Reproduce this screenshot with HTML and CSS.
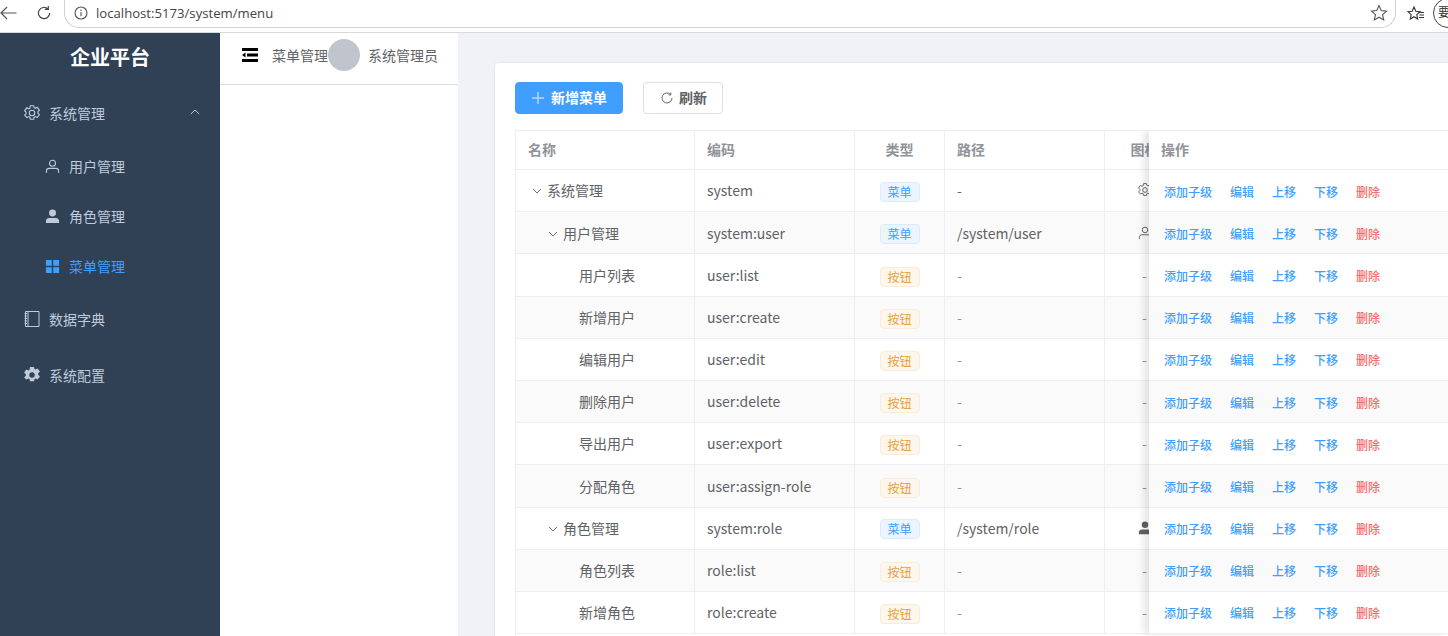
FILE: index.html
```html
<!DOCTYPE html>
<html lang="zh">
<head>
<meta charset="utf-8">
<title>菜单管理</title>
<link rel="stylesheet" href="styles.css">
</head>
<body>
<div class="browser">
  <svg class="b-back" width="18" height="14" viewBox="0 0 18 14"><path d="M16.500 7H1M7 1 1 7l6 6" fill="none" stroke="#555" stroke-width="1.2"/></svg>
  <svg class="b-reload" width="16" height="16" viewBox="0 0 16 16"><path d="M13.600 8a5.600 5.600 0 1 1-1.700-4M12.300 1v3.400H8.900" fill="none" stroke="#444" stroke-width="1.200"/></svg>
  <div class="omnibox">
    <svg width="14" height="14" viewBox="0 0 14 14"><circle cx="7" cy="7" r="6" fill="none" stroke="#555" stroke-width="1.100"/><path d="M7 6v4.200M7 3.600v1.300" stroke="#555" stroke-width="1.100"/></svg>
    <span class="url">localhost:5173/system/menu</span>
    <svg class="star" width="18" height="18" viewBox="0 0 18 18"><path d="m9 1.600 2.200 4.900 5.300.6-4 3.500 1.200 5.300L9 13.200l-4.700 2.700 1.200-5.300-4-3.500 5.300-.6z" fill="none" stroke="#555" stroke-width="1.100"/></svg>
  </div>
  <svg class="b-fav" width="18" height="18" viewBox="0 0 18 18"><path d="m7 2 1.800 4.200 4.200.5-3.200 2.900.9 4.400L7 11.700l-3.700 2.300.9-4.400L1 6.700l4.200-.5zM12 7.500h5M12.500 10h4.500M12 12.500h5" fill="none" stroke="#333" stroke-width="1.100"/></svg>
  <div class="b-profile">要</div>
</div>
<div class="app">
  <aside class="sidebar">
    <div class="logo">企业平台</div>
    <div class="menu-item top first">
      <svg class="mi big" viewBox="0 0 16 16"><path d="M6.300.5h3.400l.4 2 1.200.6 1.900-1 2.200 2.900-1.500 1.500v1.500l1.500 1.500-2.200 2.900-1.900-1-1.200.6-.4 2H6.300l-.4-2-1.200-.6-1.900 1L.6 10l1.500-1.500V7L.6 5.500l2.200-2.900 1.900 1 1.200-.6z" transform="translate(0 .2)" fill="none" stroke="#bfcbd9" stroke-width="1.100"/><circle cx="8" cy="8" r="2.700" fill="none" stroke="#bfcbd9" stroke-width="1.100"/></svg>
      <span class="mt">系统管理</span>
      <svg class="caret" width="10" height="6" viewBox="0 0 10 6"><path d="m.8 5 4.200-4 4.200 4" fill="none" stroke="#bfcbd9"/></svg>
    </div>
    <div class="menu-item sub">
      <svg class="mi" viewBox="0 0 16 16"><circle cx="8" cy="4.500" r="3.200" fill="none" stroke="#bfcbd9" stroke-width="1.100"/><path d="M1.500 15v-2c0-2 1.500-3 3-3h7c1.500 0 3 1 3 3v2" fill="none" stroke="#bfcbd9" stroke-width="1.100"/></svg>
      <span class="mt">用户管理</span>
    </div>
    <div class="menu-item sub">
      <svg class="mi" viewBox="0 0 16 16"><circle cx="8" cy="4.300" r="3.700" fill="#bfcbd9"/><path d="M1 15v-2.200C1 11 2.500 9.600 4.500 9.600h7c2 0 3.500 1.400 3.500 3.200V15z" fill="#bfcbd9"/></svg>
      <span class="mt">角色管理</span>
    </div>
    <div class="menu-item sub active">
      <svg class="mi" viewBox="0 0 16 16"><path d="M1 1h6.200v6.200H1zM8.800 1H15v6.200H8.800zM1 8.800h6.200V15H1zM8.800 8.800H15V15H8.800z" fill="#409eff"/></svg>
      <span class="mt">菜单管理</span>
    </div>
    <div class="menu-item top dict">
      <svg class="mi big" viewBox="0 0 16 16"><path d="M1.500.5h13.500v15H1.500zM4 .5v15M.5 2.500h2.500M.5 5h2.500M.5 7.500h2.500M.5 10h2.500M.5 12.500h2.500" fill="none" stroke="#bfcbd9" stroke-width="1"/></svg>
      <span class="mt">数据字典</span>
    </div>
    <div class="menu-item top conf">
      <svg class="mi big" viewBox="0 0 16 16"><path d="M6-.2h4l.5 2.200 1 .5 2.100-1.100 2.300 3.200-1.700 1.600v1.600l1.700 1.600-2.300 3.200-2.100-1.100-1 .5-.5 2.200H6l-.5-2.200-1-.5-2.100 1.100L.1 10.400l1.700-1.600V7.200L.1 5.600l2.300-3.200 2.100 1.100 1-.5z" fill="#bfcbd9"/><circle cx="8" cy="8" r="2.700" fill="#304156"/></svg>
      <span class="mt">系统配置</span>
    </div>
  </aside>
  <div class="left-col">
    <header class="topbar">
      <svg class="fold" width="16" height="14" viewBox="0 0 16 14"><path d="M0 0h16v3H0zM5 5.500h11v3H5zM0 11h16v3H0zM0 7l3.500-2.500v5z" fill="#000"/></svg>
      <span class="crumb">菜单管理</span>
      <span class="avatar"></span>
      <span class="username">系统管理员</span>
    </header>
  </div>
  <main class="main">
    <section class="card">
      <div class="toolbar">
        <button class="btn primary"><svg width="12" height="12" viewBox="0 0 12 12"><path d="M6 0v12M0 6h12" stroke="#b3d8ff" stroke-width="1.500"/></svg><span>新增菜单</span></button>
        <button class="btn plain"><svg width="12" height="12" viewBox="0 0 12 12"><path d="M11 6a5 5 0 1 1-1.500-3.600M9.800.6v2.300H7.500" fill="none" stroke="#606266" stroke-width="1"/></svg><span>刷新</span></button>
      </div>
      <div class="table-wrap">
        <table class="table">
          <colgroup><col class="c1"><col class="c2"><col class="c3"><col class="c4"><col class="c5"></colgroup>
          <thead><tr><th>名称</th><th>编码</th><th class="ctr">类型</th><th>路径</th><th class="ctr">图标</th></tr></thead>
          <tbody>
            <tr><td class="l0"><svg class="ex" viewBox="0 0 10 6"><path d="m1 1 4 4 4-4" fill="none" stroke="#606266" stroke-width=".9"/></svg>系统管理</td><td>system</td><td class="ctr"><span class="tag m">菜单</span></td><td>-</td><td class="ctr"><svg class="ti" viewBox="0 0 16 16"><path d="M6.300.5h3.400l.4 2 1.200.6 1.900-1 2.200 2.900-1.500 1.500v1.500l1.500 1.500-2.200 2.900-1.900-1-1.200.6-.4 2H6.300l-.4-2-1.200-.6-1.900 1L.6 10l1.500-1.500V7L.6 5.500l2.200-2.900 1.900 1 1.200-.6z" transform="translate(0 .2)" fill="none" stroke="#606266" stroke-width="1.100"/><circle cx="8" cy="8" r="2.700" fill="none" stroke="#606266" stroke-width="1.100"/></svg></td></tr>
            <tr class="alt"><td class="l1"><svg class="ex" viewBox="0 0 10 6"><path d="m1 1 4 4 4-4" fill="none" stroke="#606266" stroke-width=".9"/></svg>用户管理</td><td>system:user</td><td class="ctr"><span class="tag m">菜单</span></td><td>/system/user</td><td class="ctr"><svg class="ti" viewBox="0 0 16 16"><circle cx="8" cy="4.500" r="3.200" fill="none" stroke="#606266" stroke-width="1.100"/><path d="M1.500 15v-2c0-2 1.500-3 3-3h7c1.500 0 3 1 3 3v2" fill="none" stroke="#606266" stroke-width="1.100"/></svg></td></tr>
            <tr><td class="l2">用户列表</td><td>user:list</td><td class="ctr"><span class="tag b">按钮</span></td><td class="dim">-</td><td class="ctr dim">-</td></tr>
            <tr class="alt"><td class="l2">新增用户</td><td>user:create</td><td class="ctr"><span class="tag b">按钮</span></td><td class="dim">-</td><td class="ctr dim">-</td></tr>
            <tr><td class="l2">编辑用户</td><td>user:edit</td><td class="ctr"><span class="tag b">按钮</span></td><td class="dim">-</td><td class="ctr dim">-</td></tr>
            <tr class="alt"><td class="l2">删除用户</td><td>user:delete</td><td class="ctr"><span class="tag b">按钮</span></td><td class="dim">-</td><td class="ctr dim">-</td></tr>
            <tr><td class="l2">导出用户</td><td>user:export</td><td class="ctr"><span class="tag b">按钮</span></td><td class="dim">-</td><td class="ctr dim">-</td></tr>
            <tr class="alt"><td class="l2">分配角色</td><td>user:assign-role</td><td class="ctr"><span class="tag b">按钮</span></td><td class="dim">-</td><td class="ctr dim">-</td></tr>
            <tr><td class="l1"><svg class="ex" viewBox="0 0 10 6"><path d="m1 1 4 4 4-4" fill="none" stroke="#606266" stroke-width=".9"/></svg>角色管理</td><td>system:role</td><td class="ctr"><span class="tag m">菜单</span></td><td>/system/role</td><td class="ctr"><svg class="ti" viewBox="0 0 16 16"><circle cx="8" cy="4.300" r="3.700" fill="#606266"/><path d="M1 15v-2.200C1 11 2.500 9.600 4.500 9.600h7c2 0 3.500 1.400 3.500 3.200V15z" fill="#606266"/></svg></td></tr>
            <tr class="alt"><td class="l2">角色列表</td><td>role:list</td><td class="ctr"><span class="tag b">按钮</span></td><td class="dim">-</td><td class="ctr dim">-</td></tr>
            <tr><td class="l2">新增角色</td><td>role:create</td><td class="ctr"><span class="tag b">按钮</span></td><td class="dim">-</td><td class="ctr dim">-</td></tr>
          </tbody>
        </table>
        <div class="fixed">
          <div class="fhead">操作</div>
          <div class="frow"><a>添加子级</a><a>编辑</a><a>上移</a><a>下移</a><a class="del">删除</a></div>
          <div class="frow alt"><a>添加子级</a><a>编辑</a><a>上移</a><a>下移</a><a class="del">删除</a></div>
          <div class="frow"><a>添加子级</a><a>编辑</a><a>上移</a><a>下移</a><a class="del">删除</a></div>
          <div class="frow alt"><a>添加子级</a><a>编辑</a><a>上移</a><a>下移</a><a class="del">删除</a></div>
          <div class="frow"><a>添加子级</a><a>编辑</a><a>上移</a><a>下移</a><a class="del">删除</a></div>
          <div class="frow alt"><a>添加子级</a><a>编辑</a><a>上移</a><a>下移</a><a class="del">删除</a></div>
          <div class="frow"><a>添加子级</a><a>编辑</a><a>上移</a><a>下移</a><a class="del">删除</a></div>
          <div class="frow alt"><a>添加子级</a><a>编辑</a><a>上移</a><a>下移</a><a class="del">删除</a></div>
          <div class="frow"><a>添加子级</a><a>编辑</a><a>上移</a><a>下移</a><a class="del">删除</a></div>
          <div class="frow alt"><a>添加子级</a><a>编辑</a><a>上移</a><a>下移</a><a class="del">删除</a></div>
          <div class="frow"><a>添加子级</a><a>编辑</a><a>上移</a><a>下移</a><a class="del">删除</a></div>
        </div>
      </div>
    </section>
  </main>
</div>
</body>
</html>
```
FILE: styles.css
```css
* { box-sizing: border-box; }
html, body { margin: 0; height: 100%; overflow: hidden; }
body { font-family: "Noto Sans CJK SC", "Noto Sans", sans-serif; font-size: 14px; color: #606266; background: #fff; }

.browser { height: 33px; display: flex; align-items: flex-start; background: #fff; border-bottom: 1px solid #d9d9d9; }
.b-back { margin: 6px 0 0 0; flex: none; }
.b-reload { margin: 5px 0 0 18px; flex: none; }
.omnibox { width: 1332px; height: 29px; margin: -1px 0 0 12px; flex: none; border: 1px solid #d0d0d0; border-top: 0; border-radius: 0 0 15px 15px; display: flex; align-items: center; padding: 0 7px 0 9px; }
.url { margin-left: 8px; font-family: "Open Sans", "Noto Sans", sans-serif; font-size: 13.15px; color: #444; flex: 1; }
.b-fav { margin: 5px 0 0 11px; flex: none; }
.b-profile { width: 30px; height: 30px; margin: -2px -20px 0 8px; flex: none; border: 1px solid #444; border-radius: 50%; font-size: 12px; line-height: 26px; padding-left: 4px; color: #333; }

.app { display: flex; height: 603px; }
.sidebar { width: 220px; flex: none; background: #304156; overflow: hidden; }
.logo { height: 47px; padding-top: 4px; text-align: center; color: #fff; font-size: 20px; font-weight: 700; line-height: 39px; }
.menu-item { display: flex; align-items: center; color: #bfcbd9; }
.top { padding-left: 24px; }
.first { height: 56px; margin-top: 5px; }
.sub { height: 50px; padding-left: 45px; }
.active { color: #409eff; }
.dict { height: 56px; }
.conf { height: 56px; }
.mi { width: 15px; height: 15px; flex: none; }
.mi.big { width: 16px; height: 16px; }
.top .mt { margin-left: 9px; }
.sub .mt { margin-left: 9px; }
.caret { margin-left: auto; margin-right: 20px; margin-bottom: 2px; }

.left-col { width: 238px; flex: none; background: #fff; }
.topbar { height: 52px; border-bottom: 1px solid #dcdfe6; display: flex; align-items: center; padding: 0 0 8px 22px; }
.fold { flex: none; margin-top: 1px; }
.crumb { margin-left: 14px; flex: none; }
.avatar { width: 32px; height: 32px; border-radius: 50%; background: #c0c4cc; flex: none; }
.username { margin-left: 8px; flex: none; }

.main { flex: 1; min-width: 0; background: #f0f2f5; padding: 29px 0 0 36px; overflow: hidden; }
.card { width: 1000px; height: 640px; background: #fff; border: 1px solid #e4e7ed; border-radius: 4px; padding: 19px 0 0 20px; }
.toolbar { display: flex; gap: 20px; height: 32px; margin-bottom: 16px; }
.btn { height: 32px; padding: 0 0 2px; border-radius: 4px; font: inherit; font-weight: 700; display: inline-flex; align-items: center; justify-content: center; cursor: pointer; }
.btn svg { margin-top: 2px; }
.btn.primary { width: 108px; background: #409eff; border: 1px solid #409eff; color: #fff; gap: 7px; padding-left: 1px; }
.btn.plain { width: 80px; background: #fff; border: 1px solid #dcdfe6; color: #606266; gap: 6px; padding-left: 2px; }

.table-wrap { position: relative; width: 985px; height: 520px; overflow: hidden; border-top: 1px solid #ebeef5; border-left: 1px solid #ebeef5; }
.table { border-collapse: separate; border-spacing: 0; table-layout: fixed; width: 669px; }
.c1 { width: 179px; } .c2 { width: 160px; } .c3 { width: 90px; } .c4 { width: 160px; } .c5 { width: 80px; }
th, td { border-right: 1px solid #ebeef5; border-bottom: 1px solid #ebeef5; padding: 0 12px .5px; text-align: left; white-space: nowrap; }
th { height: 39px; padding-bottom: 2px; color: #909399; font-weight: 700; }
td { height: 42.2px; }
td:last-child, th:last-child { padding-left: 0; padding-right: 0; }
.ctr { text-align: center; }
.alt td, .frow.alt { background: #fafafa; }
.dim { color: #909399; }
.l0 { padding-left: 16px; }
.l1 { padding-left: 32px; }
.l2 { padding-left: 63px; }
.ex { width: 10px; height: 6px; margin-right: 5px; vertical-align: 2px; }
.ti { width: 14px; height: 14px; vertical-align: -1px; }
.tag { display: inline-block; width: 40px; height: 20px; line-height: 18px; border-radius: 4px; font-size: 12px; border: 1px solid; text-align: center; margin-top: 3px; }
.tag.m { color: #409eff; background: #ecf5ff; border-color: #d9ecff; }
.tag.b { color: #e6a23c; background: #fdf6ec; border-color: #faecd8; margin-top: 4px; }

.fixed { position: absolute; left: 633px; top: 0; width: 300px; background: #fff; box-shadow: -5px 0 7px rgba(0,0,0,.1); }
.fhead { height: 39px; padding: 0 0 2px 12px; display: flex; align-items: center; color: #909399; font-weight: 700; border-bottom: 1px solid #ebeef5; }
.frow { height: 42.2px; display: flex; align-items: center; gap: 18px; padding: 1px 0 0 15px; font-size: 12px; font-weight: 500; color: #409eff; border-bottom: 1px solid #ebeef5; background: #fff; }
.del { color: #f56c6c; }
```
